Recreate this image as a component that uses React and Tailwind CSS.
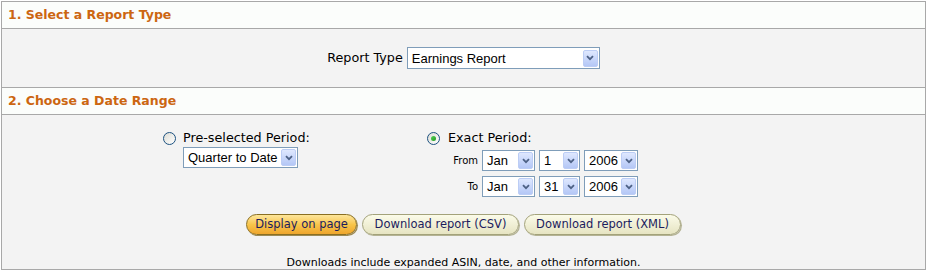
import React from 'react';

const Chevron = () => (
    <svg width="8" height="6" viewBox="0 0 8 6">
        <path d="M1 1.2 L4 4.2 L7 1.2" fill="none" stroke="#4d6185" strokeWidth="1.8" />
    </svg>
);

function Select({ value, className }) {
    return (
        <div className={`flex h-[21px] items-center border border-[#7f9db9] bg-white ${className}`}>
            <span className="flex-1 pl-[4px] font-['Liberation_Sans',Arial,sans-serif] text-[13px] leading-none text-black">{value}</span>
            <span className="mr-px flex h-[17px] w-[15px] items-center justify-center rounded-[2px] border border-[#bccdf5] bg-gradient-to-b from-[#dfe8fe] to-[#b4c7f6]">
                <Chevron />
            </span>
        </div>
    );
}

function Radio({ checked }) {
    return (
        <span className="flex h-[13px] w-[13px] items-center justify-center rounded-full border border-[#1c5180] bg-gradient-to-br from-[#dcdcd5] to-white">
            {checked && <span className="h-[5px] w-[5px] rounded-full bg-gradient-to-br from-[#55d155] to-[#1f991f]" />}
        </span>
    );
}

function Header({ children }) {
    // height includes the bottom border (border-box)
    return (
        <div className="flex h-[27px] items-center border-b border-[#a8a8a8] bg-[#fbfdfb] pl-[6px] font-['DejaVu_Sans',Verdana,sans-serif] text-[12.5px] font-bold text-[#cc6611]">
            {children}
        </div>
    );
}

export default function App() {
    return (
        <div className="min-h-[272px] bg-white pl-px pt-px font-['DejaVu_Sans',Verdana,sans-serif] text-black">
            <div className="w-[925px] border border-[#a8a8a8] bg-[#f3f3f3]">
                <Header>1. Select a Report Type</Header>
                <div className="flex h-[59px] items-center justify-center gap-[4px] border-b border-[#a8a8a8]">
                    <span className="text-[12.75px]">Report Type</span>
                    <Select value="Earnings Report" className="h-[22px] w-[193px]" />
                </div>

                <Header>2. Choose a Date Range</Header>
                <div className="h-[154px] pt-[15px]">
                    <div className="flex pl-[161px]">
                        <div className="w-[264px]">
                            <div className="flex h-[16px] items-center gap-[7px] text-[12.75px]">
                                <Radio />
                                <span>Pre-selected Period:</span>
                            </div>
                            <Select value="Quarter to Date" className="ml-[20px] mt-px w-[115px]" />
                        </div>
                        <div>
                            <div className="flex h-[16px] items-center gap-[8px] text-[12.75px]">
                                <Radio checked />
                                <span>Exact Period:</span>
                            </div>
                            <div className="mt-[4px] grid grid-cols-[51px_auto_auto_auto] items-center gap-x-[4px] gap-y-[5px]">
                                <span className="text-right text-[10px]">From</span>
                                <Select value="Jan" className="w-[53px]" />
                                <Select value="1" className="w-[41px]" />
                                <Select value="2006" className="w-[54px]" />
                                <span className="text-right text-[10px]">To</span>
                                <Select value="Jan" className="w-[53px]" />
                                <Select value="31" className="w-[41px]" />
                                <Select value="2006" className="w-[54px]" />
                            </div>
                        </div>
                    </div>

                    <div className="mt-[17px] flex justify-center gap-[5px] text-[11.5px] text-[#1c1c5e]">
                        <button className="h-[21px] w-[111px] rounded-full border border-[#8a6f22] bg-gradient-to-b from-[#fde69a] via-[#f8c54a] to-[#eea52c] shadow-[1px_1px_0_#9c8a55]">
                            Display on page
                        </button>
                        <button className="h-[21px] w-[157px] rounded-full border border-[#a3a27a] bg-gradient-to-b from-[#fbfbe9] to-[#e6e4c2] shadow-[1px_1px_0_#b4b394]">
                            Download report (CSV)
                        </button>
                        <button className="h-[21px] w-[157px] rounded-full border border-[#a3a27a] bg-gradient-to-b from-[#fbfbe9] to-[#e6e4c2] shadow-[1px_1px_0_#b4b394]">
                            Download report (XML)
                        </button>
                    </div>

                    <div className="mt-[22px] text-center text-[11px] leading-[12px]">
                        Downloads include expanded ASIN, date, and other information.
                    </div>
                </div>
            </div>
        </div>
    );
}
